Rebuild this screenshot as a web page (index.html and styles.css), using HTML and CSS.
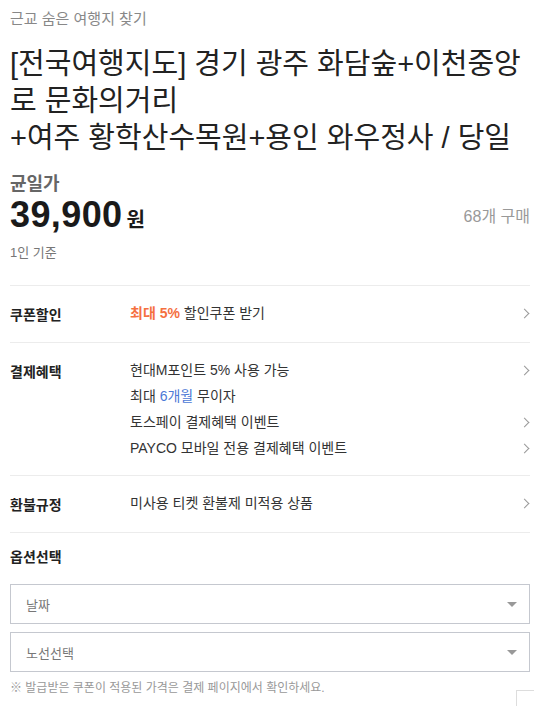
FILE: index.html
```html
<!DOCTYPE html>
<html lang="ko">
<head>
<meta charset="utf-8">
<link rel="stylesheet" href="styles.css">
</head>
<body>
<div class="page">
  <div class="sub">근교 숨은 여행지 찾기</div>
  <h1 class="title">[전국여행지도] 경기 광주 화담숲+이천중앙로 문화의거리<br>+여주 황학산수목원+용인 와우정사 / 당일</h1>

  <div class="price-block">
    <div class="price-label">균일가</div>
    <div class="price-row">
      <div class="price"><span class="num">39,900</span><span class="won">원</span></div>
      <div class="sold">68개 구매</div>
    </div>
    <div class="basis">1인 기준</div>
  </div>

  <div class="info-row">
    <div class="label">쿠폰할인</div>
    <div class="values">
      <div class="val"><span><b class="orange">최대 5%</b> 할인쿠폰 받기</span><span class="chev"></span></div>
    </div>
  </div>

  <div class="info-row">
    <div class="label">결제혜택</div>
    <div class="values">
      <div class="val"><span>현대M포인트 5% 사용 가능</span><span class="chev"></span></div>
      <div class="val"><span>최대 <span class="blue">6개월</span> 무이자</span></div>
      <div class="val"><span>토스페이 결제혜택 이벤트</span><span class="chev"></span></div>
      <div class="val"><span>PAYCO 모바일 전용 결제혜택 이벤트</span><span class="chev"></span></div>
    </div>
  </div>

  <div class="info-row">
    <div class="label">환불규정</div>
    <div class="values">
      <div class="val"><span>미사용 티켓 환불제 미적용 상품</span><span class="chev"></span></div>
    </div>
  </div>

  <div class="options">
    <div class="opt-title">옵션선택</div>
    <div class="select"><span>날짜</span><span class="tri"></span></div>
    <div class="select"><span>노선선택</span><span class="tri"></span></div>
    <div class="note">※ 발급받은 쿠폰이 적용된 가격은 결제 페이지에서 확인하세요.</div>
  </div>
  <div class="float-btn"></div>
</div>
</body>
</html>
```
FILE: styles.css
```css
* { box-sizing: border-box; }
html, body { margin: 0; padding: 0; background: #fff; }
body {
  font-family: "Liberation Sans", "Noto Sans CJK KR", sans-serif;
  color: #222;
  overflow: hidden;
  height: 706px;
}
.page {
  padding: 9px 4px 0 10px;
  position: relative;
  height: 706px;
}
.sub {
  font-size: 15px;
  line-height: 20px;
  color: #888;
}
.title {
  margin: 17px 0 0;
  font-size: 29px;
  font-weight: normal;
  line-height: 37px;
  color: #222;
}
.price-block {
  padding-top: 15px;
  padding-bottom: 23px;
  border-bottom: 1px solid #ececec;
}
.price-label {
  font-size: 18px;
  font-weight: bold;
  color: #666;
  line-height: 24px;
}
.price-row {
  display: flex;
  justify-content: space-between;
  align-items: center;
  height: 40px;
  margin-top: -1px;
}
.price { display: flex; align-items: baseline; }
.num {
  font-size: 36px;
  font-weight: bold;
  color: #1a1a1a;
  letter-spacing: 0.4px;
}
.won {
  font-size: 20px;
  font-weight: bold;
  margin-left: 4px;
  color: #1a1a1a;
}
.sold {
  font-size: 16px;
  color: #999;
}
.basis {
  margin-top: 9px;
  font-size: 13px;
  color: #777;
  line-height: 18px;
}
.info-row {
  display: flex;
  padding: 14px 0 14px;
  border-bottom: 1px solid #ececec;
}
.label {
  width: 120px;
  flex: none;
  font-size: 14px;
  font-weight: bold;
  color: #222;
  line-height: 26px;
  padding-top: 2px;
}
.values { flex: 1; display: flex; flex-direction: column; }
.val {
  display: flex;
  justify-content: space-between;
  align-items: center;
  font-size: 14px;
  line-height: 26px;
  color: #333;
}
.orange { color: #f5703f; }
.blue { color: #4b78d6; }
.chev {
  width: 7px;
  height: 7px;
  border-right: 1px solid #999;
  border-top: 1px solid #999;
  transform: rotate(45deg);
  margin-right: 2px;
}
.options { padding-top: 13px; }
.opt-title {
  font-size: 14px;
  font-weight: bold;
  line-height: 22px;
  color: #222;
  margin-bottom: 16px;
}
.select {
  height: 40px;
  border: 1px solid #c5c8cf;
  display: flex;
  justify-content: space-between;
  align-items: center;
  padding: 0 12px 0 15px;
  font-size: 13px;
  color: #777;
  margin-bottom: 8px;
}
.tri {
  width: 0;
  height: 0;
  border-left: 5px solid transparent;
  border-right: 5px solid transparent;
  border-top: 5px solid #999;
}
.note {
  margin-top: 4px;
  font-size: 12px;
  color: #999;
  line-height: 16px;
}
.float-btn {
  position: absolute;
  left: 516px;
  top: 690px;
  width: 40px;
  height: 40px;
  border: 1px solid #ddd;
  background: #fff;
}
```
